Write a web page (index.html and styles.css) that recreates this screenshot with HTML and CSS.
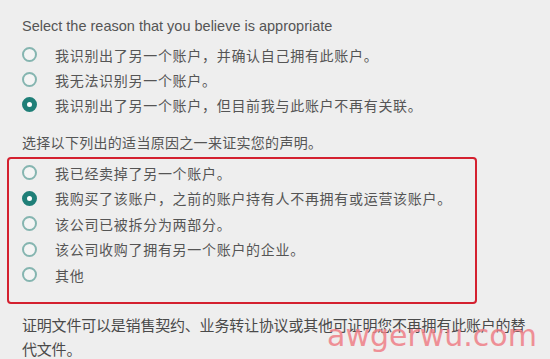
FILE: index.html
```html
<!DOCTYPE html>
<html lang="zh-CN">
<head>
    <meta charset="UTF-8">
    <title>Reason</title>
    <link rel="stylesheet" href="styles.css">
</head>
<body>
    <div class="page">
        <p class="heading">Select the reason that you believe is appropriate</p>
        <div class="group">
            <div class="option"><span class="radio"></span>我识别出了另一个账户，并确认自己拥有此账户。</div>
            <div class="option"><span class="radio"></span>我无法识别另一个账户。</div>
            <div class="option"><span class="radio checked"></span>我识别出了另一个账户，但目前我与此账户不再有关联。</div>
        </div>

        <p class="heading heading-cn">选择以下列出的适当原因之一来证实您的声明。</p>
        <div class="group boxed">
            <div class="option"><span class="radio"></span>我已经卖掉了另一个账户。</div>
            <div class="option"><span class="radio checked"></span>我购买了该账户，之前的账户持有人不再拥有或运营该账户。</div>
            <div class="option"><span class="radio"></span>该公司已被拆分为两部分。</div>
            <div class="option"><span class="radio"></span>该公司收购了拥有另一个账户的企业。</div>
            <div class="option"><span class="radio"></span>其他</div>
        </div>

        <p class="note">证明文件可以是销售契约、业务转让协议或其他可证明您不再拥有此账户的替代文件。</p>
    </div>
    <div class="watermark">awgerwu.com</div>
</body>
</html>
```

FILE: styles.css
```css
html, body {
    margin: 0;
    background: #eeeeee;
}

body {
    font-family: "Liberation Sans", "Noto Sans CJK SC", sans-serif;
    color: #555555;
    position: relative;
    height: 359px;
    overflow: hidden;
}

.page {
    padding: 16px 0 0 7px;
}

.heading {
    margin: 0;
    padding-left: 15px;
    font-size: 14.5px;
    line-height: 20px;
}

.heading-cn {
    margin-top: 16px;
    font-size: 14px;
    letter-spacing: 0.3px;
}

.group {
    width: 470px;
    box-sizing: border-box;
    margin-top: 6px;
}

.group.boxed {
    margin-top: 4px;
    border: 2px solid #d4202f;
    border-radius: 4px;
    padding: 1px 0 14px;
}

.option {
    display: flex;
    align-items: center;
    height: 25px;
    padding-left: 15px;
    font-size: 14px;
    letter-spacing: 0.7px;
    white-space: nowrap;
}

.boxed .option {
    height: 25.5px;
    padding-left: 13px;
}

/* radio circles */
.radio {
    width: 15px;
    height: 15px;
    box-sizing: border-box;
    border: 2px solid #85b5b0;
    border-radius: 50%;
    margin-right: 18px;
    flex-shrink: 0;
    background: #f4f4f4;
}

.radio.checked {
    border: 5px solid #1f7f78;
    background: #ffffff;
}

.note {
    margin: 10px 0 0;
    padding-left: 15px;
    width: 510px;
    font-size: 15px;
    line-height: 24px;
    letter-spacing: -0.2px;
    color: #4a4a4a;
}

.watermark {
    position: absolute;
    left: 327px;
    top: 321px;
    font-family: "DejaVu Sans", sans-serif;
    font-size: 30px;
    line-height: 30px;
    color: #ee7f87;
    opacity: 0.85;
}
```
